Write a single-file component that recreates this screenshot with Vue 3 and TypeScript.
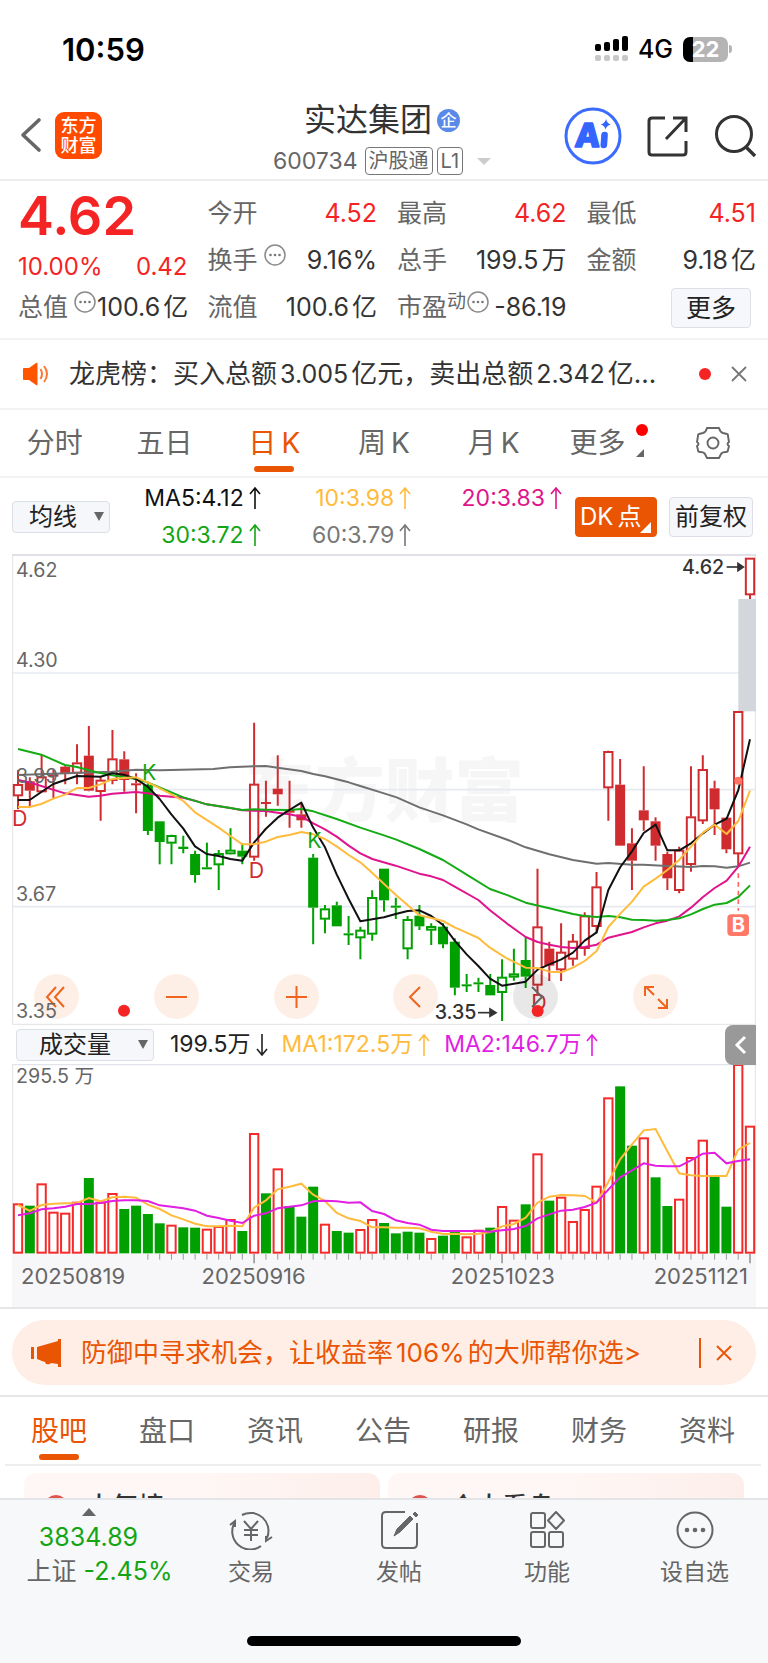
<script setup lang="ts">
import { ref } from 'vue'

type Point = [number, number]
type Candle = { kind: string; x: number; high: number; top: number; bottom: number; low: number }

const STEP = 35.42
const FIRST = 18
const xAt = (i: number): number => FIRST + STEP * i

/* Each row: kind, high, body top, body bottom, low. r/g hollow, R/G filled. */
const parse = (start: number, shift: number, rows: string): Candle[] =>
  rows
    .trim()
    .split(/\s*;\s*/)
    .map((row, n) => {
      const [kind, ...v] = row.split(' ')
      const [high, top, bottom, low] = v.map((s) => Number(s) + shift)
      return { kind, x: xAt(start + n), high, top, bottom, low }
    })

const candles: Candle[] = [
  ...parse(0, 498, `r 150 193 228 268; R 172 184 212 258; r 104 170 216 216; R 150 163 170 235; R 135 140 162 193;
    r 73 128 160 193; R 18 107 212 214; r 170 180 215 302; r 30 116 182 193; R 94 118 180 215; R 160 190 195 280;
    G 190 195 333 345; G 304 304 366 433; g 344 346 370 433; G 347 380 387 400; G 392 402 465 488; G 368 442 446 446;
    g 390 400 435 510; g 325 390 402 403; G 370 392 410 433; r 8 192 412 422; R 182 246 250 290; R 106 206 223 257;
    R 182 268 278 323; R 250 283 301 323; G 402 413 563 673; g 555 566 598 640; G 545 556 619 619; G 588 640 644 675;
    g 620 630 654 718; g 511 532 643 662; G 446 446 541 575; G 533 557 563 597; g 588 598 687 718; G 555 587 619 630;
    g 610 619 631 675; G 610 620 673 685; G 655 665 803 826; G 762 793 797 816; G 773 787 793 816; G 762 795 826 826;
    g 718 771 818 903`),
  ...parse(42, 438, `g 746 821 832 842; G 711 780 830 864; r 506 680 856 885; R 725 746 797 843; r 670 756 810 843;
    r 702 723 778 797; r 637 647 746 767; r 516 560 680 700; r 152 154 264 362; R 177 254 437 437; R 385 430 482 570;
    R 199 331 361 392; R 352 364 437 482; R 455 462 535 570; r 440 450 572 580; r 199 350 494 515; r 166 208 363 372;
    R 242 265 328 405; R 352 353 448 460; r 34 34 462 500; r -426 -426 -315 -303`),
]

/* Averages are stored in three stretches of the timeline, each with its own origin. */
const origins: Point[] = [[-36, 498], [714, 498], [1488, 438]]
const stitch = (...parts: string[]): string =>
  parts
    .map((part, n) =>
      part
        .split(' ')
        .map((pair) => {
          const [x, y] = pair.split(',').map(Number)
          return `${x + origins[n][0]},${y + origins[n][1]}`
        })
        .join(' '),
    )
    .join(' ')

const averages = [
  {
    color: '#6f6f6f',
    points: stitch(
      '54,165 200,160 337,155 408,149 480,151 640,147 690,142 762,139',
      '47,138 83,143 154,153 190,162 225,169 296,187 331,198 402,220 440,232 508,262 579,286 650,313 685,328',
      '0,420 53,442 124,463 195,480 266,491 301,489 372,494 407,494 478,498 549,501 585,498 620,499 656,503 691,499 726,488',
    ),
  },
  {
    color: '#e0148c',
    points: stitch(
      '54,180 89,187 124,198 195,220 266,230 301,227 337,221 408,216 443,220 480,227 550,233 585,242 620,253 691,264 727,271 762,272',
      '47,273 83,278 118,283 154,290 190,310 225,328 260,350 296,377 331,400 367,417 437,437 508,461 544,469 579,480 614,500 685,540 720,571',
      '0,673 53,711 89,726 124,734 160,741 195,744 230,741 266,734 301,713 372,696 407,682 443,670 478,662 514,649 549,623 585,591 620,564 656,542 691,500 726,440',
    ),
  },
  {
    color: '#14ab14',
    points: stitch(
      '54,87 124,104 195,135 231,141 290,157 337,166 408,177 443,187 550,232 620,253 691,264 727,270 762,268',
      '47,269 118,270 154,267 190,274 260,297 331,323 402,346 437,358 508,387 579,420 650,464 720,507',
      '0,586 53,608 124,625 195,642 230,648 266,651 301,648 337,652 372,659 407,660 443,662 478,660 514,655 549,643 585,627 620,614 656,609 691,591 726,556',
    ),
  },
  {
    color: '#111111',
    points: stitch(
      '54,240 89,240 124,216 160,192 195,180 231,168 301,170 337,160 372,164 408,177 443,200 479,237 514,283 550,326 585,379 620,402 656,408 691,417 727,422 762,368',
      '47,327 83,293 118,270 154,248 189,322 225,382 260,463 296,537 331,604 367,598 402,592 437,582 473,573 508,571 544,588 579,615 614,662 650,703 685,738 720,776 756,797',
      '0,854 53,845 89,809 124,793 160,778 195,758 230,722 266,697 301,570 337,501 372,454 407,399 443,374 478,451 514,451 549,430 585,400 620,374 656,356 691,270 726,118',
    ),
  },
  {
    color: '#ffbb3c',
    points: stitch(
      '54,261 89,261 124,252 160,236 195,224 231,204 266,204 301,193 337,177 372,174 408,172 443,187 480,205 514,223 550,243 585,277 656,323 691,348 727,373 762,373',
      '47,365 83,351 118,345 154,336 190,343 225,357 260,379 296,405 331,427 367,459 437,524 508,586 544,594 579,603 614,622 650,638 685,654 720,683 756,706',
      '0,777 53,803 89,804 124,815 160,817 195,803 230,783 266,753 301,681 337,641 372,605 407,560 443,536 478,510 514,479 549,440 585,398 620,374 656,402 691,363 726,272',
    ),
  },
]

const BASE = 697
const volumes = (
  'r550 G555 r490 r575 r578 r545 G472 r545 r519 G565 G555 G580 G608 r614 G620 G621 r626 r618 r597 G631 r339 G518 ' +
  'r445 G556 G588 G498 r611 G631 G636 r627 r597 G607 G638 G633 G636 r654 G645 G628 r649 r629 G621 r558 r599 G551 ' +
  'r400 G540 r530 r603 r567 r497 r232 G197 G375 r352 G470 G556 r536 r411 r359 G465 G558 r132 r317'
)
  .split(' ')
  .map((v, i) => ({ up: v[0] === 'r', y: Number(v.slice(1)), x: xAt(i) }))

const trace = (values: string): string =>
  values
    .split(' ')
    .map((v, i) => `${xAt(i)},${v}`)
    .join(' ')
const volumeShort = trace(
  '552 570 552 548 547 546 531 541 529 527 530 551 564 583 595 608 616 616 614 616 560 538 505 497 488 521 540 576 592 600 619 619 620 620 622 632 639 638 640 638 633 616 609 590 545 527 522 523 525 545 483 415 370 328 324 391 457 463 465 465 465 386 366',
)
const volumeLong = trace(
  '583 577 565 562 557 549 549 546 540 538 538 540 553 557 562 569 584 591 599 606 584 577 562 557 553 541 539 541 545 544 570 579 598 606 611 626 630 630 630 630 632 628 624 615 592 580 569 566 558 545 506 469 448 427 434 436 436 418 398 395 427 420 415',
)
const ticks = Array.from({ length: 52 }, (_, n) => n + 11)
const isMajor = (i: number): boolean => i === 20 || i === 41 || i === 62

const periods = [
  { zh: '分时', en: '' },
  { zh: '五日', en: '' },
  { zh: '日', en: 'K' },
  { zh: '周', en: 'K' },
  { zh: '月', en: 'K' },
]
const period = ref(2)
const sections = ['股吧', '盘口', '资讯', '公告', '研报', '财务', '资料']
const section = ref(0)
const mas = [
  { text: 'MA5:4.12', tone: 'black' },
  { text: '10:3.98', tone: 'amber' },
  { text: '20:3.83', tone: 'pink' },
  { text: '30:3.72', tone: 'green' },
  { text: '60:3.79', tone: 'gray' },
]
</script>

<template>
  <div class="app">
    <svg class="defs" aria-hidden="true">
      <symbol id="arrow-up" viewBox="0 0 12 24">
        <path d="M6 23V2M1 8l5-6 5 6" fill="none" stroke="currentColor" stroke-width="1.6" />
      </symbol>
      <symbol id="info" viewBox="0 0 24 24">
        <circle cx="12" cy="12" r="10" fill="none" stroke="#8a8a8a" stroke-width="1.5" />
        <circle cx="7.5" cy="12" r="1.3" fill="#777" /><circle cx="12" cy="12" r="1.3" fill="#777" /><circle cx="16.5" cy="12" r="1.3" fill="#777" />
      </symbol>
      <symbol id="cross" viewBox="0 0 20 20">
        <path d="M3 3l14 14M17 3L3 17" fill="none" stroke="currentColor" stroke-width="1.8" />
      </symbol>
    </svg>

    <div class="status">
      <time>10:59</time>
      <div class="status-right">
        <svg width="36" height="26" viewBox="0 0 36 26">
          <g fill="#000"><rect x="1" y="8" width="6" height="7" rx="2" /><rect x="10" y="6" width="6" height="9" rx="2" /><rect x="19" y="3" width="6" height="12" rx="2" /><rect x="28" y="0" width="6" height="15" rx="2" /></g>
          <g fill="#c8c8c8"><rect x="1" y="19" width="6" height="6" rx="2" /><rect x="10" y="19" width="6" height="6" rx="2" /><rect x="19" y="19" width="6" height="6" rx="2" /><rect x="28" y="19" width="6" height="6" rx="2" /></g>
        </svg>
        <span class="net">4G</span>
        <span class="battery">22</span>
        <i class="battery-cap"></i>
      </div>
    </div>

    <header class="header">
      <div class="header-side">
        <button class="bare" aria-label="返回">
          <svg width="24" height="36" viewBox="0 0 24 36"><path d="M20 3L4 18l16 15" fill="none" stroke="#666" stroke-width="3.6" stroke-linecap="round" stroke-linejoin="round" /></svg>
        </button>
        <a class="logo" href="#">东方<br />财富</a>
      </div>
      <div class="header-mid">
        <h1>实达集团<span class="corp">企</span></h1>
        <div class="code">
          <span>600734</span><span class="tag">沪股通</span><span class="tag">L1</span><i class="caret"></i>
        </div>
      </div>
      <div class="header-side end">
        <button class="bare" aria-label="Ai">
          <svg width="58" height="58" viewBox="0 0 58 58">
            <circle cx="29" cy="29" r="27" fill="none" stroke="#3b6bff" stroke-width="3" />
            <g fill="#3565ff" stroke="#3565ff" transform="skewX(-4)">
              <text x="13" y="40" font-size="33" font-weight="800" stroke-width="1.6" stroke-linejoin="round">A</text>
              <path d="M42.500 28v10" stroke-width="6.600" stroke-linecap="round" />
              <path d="M43 12q1 4.400 5 5.400q-4 1-5 5q-1-4-5-5q4-1 5-5.400z" stroke="none" />
            </g>
          </svg>
        </button>
        <button class="bare" aria-label="分享">
          <svg width="44" height="44" viewBox="0 0 44 44"><path d="M19 4H6q-3 0-3 3v31q0 3 3 3h31q3 0 3-3V27M27 4h13v14M39 5L20 25" fill="none" stroke="#333" stroke-width="3" /></svg>
        </button>
        <button class="bare" aria-label="搜索">
          <svg width="44" height="44" viewBox="0 0 44 44"><circle cx="20" cy="20" r="17.500" fill="none" stroke="#333" stroke-width="3" /><path d="M32 33l9 9" stroke="#333" stroke-width="3.400" /></svg>
        </button>
      </div>
    </header>

    <section class="quote">
      <div class="price">4.62</div>
      <div class="cell r1 c2"><span class="k">今开</span><span class="v red">4.52</span></div>
      <div class="cell r1 c3"><span class="k">最高</span><span class="v red">4.62</span></div>
      <div class="cell r1 c4"><span class="k">最低</span><span class="v red">4.51</span></div>
      <div class="cell r2 c1 change"><span>10.00%</span><span>0.42</span></div>
      <div class="cell r2 c2"><span class="k">换手<svg class="info"><use href="#info" /></svg></span><span class="v">9.16%</span></div>
      <div class="cell r2 c3"><span class="k">总手</span><span class="v">199.5<b>万</b></span></div>
      <div class="cell r2 c4"><span class="k">金额</span><span class="v">9.18<b>亿</b></span></div>
      <div class="cell r3 c1"><span class="k">总值<svg class="info"><use href="#info" /></svg></span><span class="v">100.6<b>亿</b></span></div>
      <div class="cell r3 c2"><span class="k">流值</span><span class="v">100.6<b>亿</b></span></div>
      <div class="cell r3 c3"><span class="k">市盈<sup>动</sup><svg class="info flush"><use href="#info" /></svg></span><span class="v">-86.19</span></div>
      <div class="cell r3 c4 last"><button class="chip more">更多</button></div>
    </section>

    <section class="news">
      <svg width="28" height="24" viewBox="0 0 28 24"><path d="M1 6.500Q1 6 2 6h5l7-5q1.500-1 1.500 1v20q0 2-1.500 1l-7-5H2q-1 0-1-1z" fill="#ff5500" /><path d="M18.500 7q3 5 0 10M22 4q6 8 0 16" fill="none" stroke="#ff7733" stroke-width="2" /></svg>
      <a href="#">龙虎榜：买入总额<em>3.005</em>亿元，卖出总额<em>2.342</em>亿...</a>
      <i class="dot"></i>
      <button class="bare gray" aria-label="关闭"><svg width="20" height="20"><use href="#cross" /></svg></button>
    </section>

    <nav class="tabs periods">
      <button v-for="(p, i) in periods" :key="p.zh" :class="{ on: period === i }" @click="period = i">{{ p.zh }}<em v-if="p.en">{{ p.en }}</em></button>
      <button class="with-mark">更多<i class="badge"></i><i class="corner"></i></button>
      <button aria-label="设置">
        <svg width="34" height="34" viewBox="0 0 34 34" fill="none" stroke="#666" stroke-width="1.900"><path d="M11 2h12q1 4 4 5l4 1q1 0 1 2l1 6q-3 2 0 4l-1 4q0 2-2 2-4 0-5 2l-2 4H11l-2-4q-1-2-5-2-2 0-2-2l-1-4q3-2 0-4l1-6q0-2 1-2l4-1q3-1 4-5z" stroke-linejoin="round" /><circle cx="17" cy="17" r="5.500" /></svg>
      </button>
    </nav>

    <section class="ma">
      <label class="select ma-select">
        <select aria-label="均线"><option>均线</option></select>
      </label>
      <div class="ma-grid">
        <span v-for="m in mas" :key="m.text" :class="m.tone">{{ m.text }}<svg class="arr"><use href="#arrow-up" /></svg></span>
      </div>
      <button class="chip dk">DK<em>点</em><i></i></button>
      <button class="chip">前复权</button>
    </section>

    <section class="charts">
      <div class="kline">
        <svg class="plot" viewBox="0 0 2232 1413">
          <text class="mark" x="700" y="786">东方财富</text>
          <g stroke="#e6eaf0" stroke-width="5"><path d="M0 357H2232M0 707H2232M0 1058H2232" /></g>
          <path d="M0 3H2232" stroke="#e0e0e6" stroke-width="6" />
          <path d="M2 3V1411H2230V3" fill="none" stroke="#e2e2e6" stroke-width="3" />
          <rect x="2179" y="135" width="53" height="337" fill="#d3d7db" />
          <g v-for="(c, i) in candles" :key="i" :stroke="c.kind.toLowerCase() === 'r' ? '#d02c30' : '#00a000'">
            <path :d="`M${c.x} ${c.high}V${c.top}M${c.x} ${c.bottom}V${c.low}`" stroke-width="6" />
            <rect v-if="c.kind === 'R' || c.kind === 'G'" :x="c.x - 15" :y="c.top" width="30" :height="Math.max(c.bottom - c.top, 6)" :fill="c.kind === 'R' ? '#d02c30' : '#00a000'" stroke="none" />
            <rect v-else :x="c.x - 12.500" :y="c.top + 2" width="25" :height="c.bottom - c.top - 4" fill="#fff" stroke-width="6" />
          </g>
          <polyline v-for="a in averages" :key="a.color" :points="a.points" fill="none" :stroke="a.color" stroke-width="6" stroke-linejoin="round" />
          <g class="axis">
            <text x="12" y="68">4.62</text><text x="12" y="338">4.30</text><text x="12" y="688">3.99</text><text x="12" y="1041">3.67</text>
          </g>
          <g class="signal down"><text x="0" y="816">D</text><text x="710" y="971">D</text><text x="1558" y="1368">D</text></g>
          <g class="signal up"><text x="390" y="679">K</text><text x="886" y="883">K</text></g>
          <g class="extreme">
            <text x="2010" y="60">4.62</text><path d="M2144 39h38" /><path d="M2178 28l16 11-16 11z" />
            <text x="1268" y="1396">3.35</text><path d="M1398 1376h40" /><path d="M1434 1365l18 11-18 11z" />
          </g>
          <circle cx="2179" cy="680" r="12" fill="#ff7565" />
          <path d="M2179 958v112" stroke="#f66" stroke-width="5" stroke-dasharray="14 12" />
          <rect x="2146" y="1081" width="65" height="65" rx="12" fill="#ff7969" />
          <text class="buy" x="2179" y="1134">B</text>
        </svg>
        <div class="tools">
          <button aria-label="最左"><svg viewBox="0 0 45 45"><path d="M22 13l-9 10 9 10M30 13l-9 10 9 10" /></svg></button>
          <button aria-label="缩小"><svg viewBox="0 0 45 45"><path d="M12 23h21" /></svg></button>
          <button aria-label="放大"><svg viewBox="0 0 45 45"><path d="M12 23h21M22.500 12v22" /></svg></button>
          <button aria-label="左移"><svg viewBox="0 0 45 45"><path d="M27 13l-10 10 10 10" /></svg></button>
          <button class="off" aria-label="右移"><svg viewBox="0 0 45 45"><path d="M19 13l10 10-10 10" /></svg></button>
          <button aria-label="全屏"><svg viewBox="0 0 45 45"><path d="M21 21l-8-8M21 13h-9v9M25 25l8 8M25 34h9v-9" /></svg></button>
        </div>
        <svg class="plot over" viewBox="0 0 2232 1413">
          <text class="axis" x="12" y="1391">3.35</text>
          <g fill="#f52424"><circle cx="336" cy="1370" r="18" /><circle cx="1577" cy="1371" r="18" /></g>
        </svg>
      </div>

      <div class="vol-head">
        <label class="select vol-select">
          <select aria-label="成交量"><option>成交量</option></select>
        </label>
        <span>199.5万<svg class="arr flip"><use href="#arrow-up" /></svg></span>
        <span class="amber">MA1:172.5万<svg class="arr"><use href="#arrow-up" /></svg></span>
        <span class="magenta">MA2:146.7万<svg class="arr"><use href="#arrow-up" /></svg></span>
        <button class="fold" aria-label="展开"><svg width="14" height="20" viewBox="0 0 14 20"><path d="M11 2L3 10l8 8" fill="none" stroke="#fff" stroke-width="3" /></svg></button>
      </div>

      <svg class="plot" viewBox="0 129 2232 600">
        <rect x="0" y="697" width="2232" height="40" fill="#f7f7fa" />
        <path d="M0 131H2232" stroke="#e2e4ec" stroke-width="4" />
        <path d="M2 131V697M2230 131V697" stroke="#e2e2e6" stroke-width="3" />
        <text class="axis" x="12" y="187">295.5 万</text>
        <template v-for="(v, i) in volumes" :key="i">
          <rect v-if="v.up" :x="v.x - 12.500" :y="v.y" width="25" :height="BASE - v.y - 2" fill="#fff" stroke="#f52a2a" stroke-width="6" />
          <rect v-else :x="v.x - 15" :y="v.y - 1" width="30" :height="BASE - v.y + 1" fill="#00a000" />
        </template>
        <path v-for="i in ticks" :key="i" :d="`M${xAt(i)} 699v${isMajor(i) ? 28 : 17}`" stroke="#999" :stroke-width="isMajor(i) ? 5 : 3" />
        <polyline :points="volumeShort" fill="none" stroke="#ffbb3c" stroke-width="6" />
        <polyline :points="volumeLong" fill="none" stroke="#e21ee2" stroke-width="6" />
      </svg>
      <div class="dates"><span>20250819</span><span>20250916</span><span>20251023</span><span>20251121</span></div>
    </section>

    <section class="promo-wrap">
      <div class="promo">
        <svg width="32" height="28" viewBox="0 0 32 28" fill="#ea5504"><path d="M0 8h3v12H0zM6 8L27 2V0h3v28h-3v-3l-7-1q-1 2-5 1l-1-2-3-1-5-2z" /></svg>
        <a href="#">防御中寻求机会，让收益率<em>106%</em>的大师帮你选&gt;</a>
        <button class="bare" aria-label="关闭推广"><svg width="20" height="20"><use href="#cross" /></svg></button>
      </div>
    </section>

    <nav class="tabs sections">
      <button v-for="(s, i) in sections" :key="s" :class="{ on: section === i }" @click="section = i">{{ s }}</button>
    </nav>

    <main class="cards">
      <article><i></i>大气榜</article>
      <article><i></i>个大看盘</article>
    </main>

    <footer class="bottom">
      <a class="index" href="#">
        <svg width="14" height="8" viewBox="0 0 14 8"><path d="M7 0l7 8H0z" fill="#666" stroke="none" /></svg>
        <span class="green">3834.89</span>
        <span class="market">上证 <b class="green">-2.45%</b></span>
      </a>
      <a href="#">
        <svg width="46" height="40" viewBox="0 0 46 40"><path d="M14 5a18 18 0 0 1 25 23M33 36A18 18 0 0 1 7 12M2 15l5-4v6M44 27l-6 4v-5M16 11l7 8 7-8M23 19v12M16 20h14M16 25h14" /></svg>
        <span>交易</span>
      </a>
      <a href="#">
        <svg width="40" height="40" viewBox="0 0 40 40"><path d="M26 2H7Q3 2 3 6v28q0 4 4 4h27q4 0 4-4V13" /><path d="M15 26l3-7L31 6l3 3-13 13zM34 4l2-2 3 3-2 2z" fill="#666" stroke-width="1" /></svg>
        <span>发帖</span>
      </a>
      <a href="#">
        <svg width="38" height="40" viewBox="0 0 38 40"><rect x="3" y="3" width="14" height="15" rx="2" /><rect x="3" y="22" width="14" height="15" rx="2" /><rect x="21" y="22" width="14" height="15" rx="2" /><path d="M28 2l8 8.500-8 8.500-8-8.500z" stroke-linejoin="round" /></svg>
        <span>功能</span>
      </a>
      <a href="#">
        <svg width="40" height="40" viewBox="0 0 40 40"><circle cx="20" cy="20" r="17.500" /><g fill="#666" stroke="none"><circle cx="12" cy="20" r="2.300" /><circle cx="20" cy="20" r="2.300" /><circle cx="28" cy="20" r="2.300" /></g></svg>
        <span>设自选</span>
      </a>
      <i class="home"></i>
    </footer>
  </div>
</template>

<style>
body {
  margin: 0;
  background: #fff;
}
</style>

<style scoped>
.app {
  display: flex;
  flex-direction: column;
  height: 100vh;
  overflow: hidden;
  background: #fff;
  color: #333;
  font-family: Inter, 'Noto Sans CJK SC', sans-serif;
  font-size: 25px;
  line-height: 1;
}
.app > * { flex: none; }
.defs { position: absolute; width: 0; height: 0; }
button, select {
  font: inherit;
  color: inherit;
  border: 0;
  margin: 0;
  padding: 0;
  background: none;
  cursor: pointer;
}
a { color: inherit; text-decoration: none; }
em, b { font-style: normal; font-weight: 400; }
svg { display: block; }
.bare { display: flex; }
.red { color: #f52424; }
.black { color: #111; }
.amber { color: #ffbb3c; }
.pink { color: #e0148c; }
.green { color: #14a514; }
.gray { color: #777; }
.magenta { color: #e21ee2; }

.status {
  display: flex;
  justify-content: space-between;
  align-items: center;
  height: 98px;
  padding: 0 36px 0 62px;
  box-sizing: border-box;
  color: #000;
}
.status time { font-size: 31px; font-weight: 600; }
.status-right { display: flex; align-items: center; }
.net { font-size: 25px; font-weight: 500; margin: 0 10px 0 8px; }
.battery {
  width: 45px;
  height: 25px;
  border-radius: 7px;
  background: linear-gradient(90deg, #000 10px, #b4b4b4 10px);
  color: #fff;
  font-size: 22px;
  font-weight: 700;
  line-height: 25px;
  text-align: center;
}
.battery-cap { width: 3px; height: 8px; margin-left: 1px; border-radius: 0 4px 4px 0; background: #b4b4b4; }

.header {
  display: grid;
  grid-template-columns: 1fr auto 1fr;
  height: 83px;
  box-sizing: border-box;
  border-bottom: 2px solid #ececee;
}
.header-side { display: flex; align-items: center; padding-left: 19px; padding-bottom: 7px; gap: 12px; }
.header-side.end { justify-content: flex-end; padding: 0 10px 5px 0; gap: 24px; }
.header-mid { padding-right: 4px; }
.logo {
  width: 47px;
  height: 47px;
  padding-top: 4px;
  box-sizing: border-box;
  border-radius: 9px;
  background: #ff4a00;
  color: #fff;
  font-size: 18px;
  font-weight: 500;
  line-height: 20px;
  text-align: center;
}
h1 { display: flex; align-items: center; justify-content: center; gap: 5px; margin: 6px 0 0; font-size: 32px; font-weight: 400; line-height: 32px; }
.corp { width: 23px; height: 23px; border-radius: 50%; background: #5a8ae8; color: #fff; font-size: 16px; font-weight: 500; line-height: 22px; text-align: center; }
.code { display: flex; align-items: center; justify-content: center; gap: 4px; height: 30px; margin-top: 10px; font-size: 23px; color: #666; }
.code > span:first-child { margin-right: 3px; }
.tag { height: 28px; padding: 0 3px; box-sizing: border-box; border: 1px solid #777; border-radius: 4px; font-size: 20px; line-height: 26px; }
.caret { margin-left: 10px; border: 7px solid transparent; border-top: 7px solid #ccc; border-bottom: 0; }

.quote {
  display: grid;
  grid-template-columns: repeat(4, minmax(0, 1fr));
  grid-template-rows: 48px 47px 47px;
  column-gap: 20px;
  height: 159px;
  padding: 8px 12px 0 18px;
  box-sizing: border-box;
  border-bottom: 2px solid #f3f3f5;
}
.price { grid-area: 1 / 1; color: #f52424; font-size: 54px; font-weight: 600; line-height: 54px; }
.cell { display: flex; justify-content: space-between; align-items: center; white-space: nowrap; }
.r1 { grid-row: 1; }
.r2 { grid-row: 2; }
.r3 { grid-row: 3; }
.c1 { grid-column: 1; }
.c2 { grid-column: 2; }
.c3 { grid-column: 3; }
.c4 { grid-column: 4; }
.k { display: flex; color: #666; }
.k sup { font-size: 19px; line-height: 14px; }
.info { width: 24px; height: 24px; margin: -5px 0 0 5px; }
.info.flush { margin-left: 0; }
.v b { margin-left: 3px; }
.change { color: #f52424; font-size: 24px; padding-top: 12px; }
.last { justify-content: flex-end; }
.chip {
  position: relative;
  height: 40px;
  padding: 0 5px;
  box-sizing: border-box;
  border: 1px solid #dcdfe6;
  border-radius: 4px;
  background: #f6f7fa;
  color: #222;
  font-size: 24px;
  line-height: 36px;
  white-space: nowrap;
}
.more { width: 80px; margin-right: 5px; font-size: 25px; }

.news { display: flex; align-items: center; height: 70px; padding: 0 19px 0 22px; box-sizing: border-box; border-bottom: 2px solid #f3f3f5; font-size: 26px; }
.news a { flex: 1; margin-left: 19px; white-space: nowrap; }
.news em, .promo em { margin: 0 3px; }
.news a em { font-size: 25px; }
.dot { width: 12px; height: 12px; margin-right: 18px; border-radius: 50%; background: #f52424; }

.tabs { display: grid; grid-template-columns: repeat(7, 1fr); box-sizing: border-box; font-size: 28px; color: #666; }
.tabs button { position: relative; display: flex; justify-content: center; align-items: center; }
.tabs em { margin-left: 5px; }
.tabs .on { color: #ea5504; }
.tabs .on::after { content: ''; position: absolute; left: 50%; bottom: 4px; width: 40px; height: 6px; margin-left: -20px; border-radius: 3px; background: #ea5504; }
.periods { height: 68px; border-bottom: 2px solid #f3f3f5; }
.with-mark { padding-right: 12px; }
.badge { position: absolute; right: 10px; top: 14px; width: 12px; height: 12px; border-radius: 50%; background: #f00; }
.corner { position: absolute; right: 14px; bottom: 19px; border-style: solid; border-width: 0 0 8px 8px; border-color: transparent transparent #666; }
.periods button:last-child { padding-bottom: 1px; }
.sections { height: 69px; margin: 0 7px 0 5px; border-bottom: 2px solid #eeeef0; }

.ma { display: flex; align-items: center; height: 77px; padding: 0 15px 0 12px; box-sizing: border-box; }
.select { position: relative; display: block; }
.select::after { content: ''; position: absolute; right: 6px; top: 11px; border: 5px solid transparent; border-top: 9px solid #666; border-bottom: 0; pointer-events: none; }
.select select {
  appearance: none;
  width: 100%;
  height: 32px;
  border: 1px solid #dcdfe6;
  border-radius: 4px;
  background: #f6f7fa;
  color: #222;
  font-size: 24px;
  line-height: 28px;
}
.ma-select { width: 98px; }
.ma-select select { padding-left: 16px; }
.vol-select { width: 138px; }
.vol-select select { padding-left: 22px; }
.ma-grid { flex: 1; display: grid; grid-template-columns: repeat(3, 1fr); row-gap: 13px; margin-right: 13px; font-size: 23px; }
.ma-grid span { display: flex; justify-content: flex-end; align-items: center; height: 24px; }
.arr { width: 12px; height: 24px; margin-left: 5px; flex: none; }
.flip { transform: rotate(180deg); }
.dk { width: 82px; padding: 0 4px; margin-right: 12px; border-color: #ea5504; background: #ea5504; color: #fff; text-align: left; overflow: hidden; }
.dk em { margin-left: 4px; }
.dk i { position: absolute; right: 5px; bottom: 3px; border-style: solid; border-width: 0 0 11px 11px; border-color: transparent transparent #fff; }

.charts { padding: 0 12px 0; border-bottom: 2px solid #e6e6e9; margin-top: -1px; }
.kline { position: relative; }
.plot { width: 100%; height: auto; }
.over { position: absolute; inset: 0; pointer-events: none; }
.axis { font-size: 59px; fill: #666; }
.mark { font-size: 209px; font-weight: 900; fill: #f6f6f6; }
.signal { font-size: 64px; }
.down { fill: #d02c30; }
.up { fill: #14a514; }
.extreme { font-size: 59px; font-weight: 500; fill: #333; stroke: none; }
.extreme path { stroke: #333; stroke-width: 5; }
.buy { font-size: 60px; font-weight: 700; fill: #fff; text-anchor: middle; }
.tools { position: absolute; left: 22px; right: 78px; bottom: 6px; display: flex; justify-content: space-between; }
.tools button { width: 45px; height: 45px; border-radius: 50%; background: rgba(253, 228, 214, 0.6); }
.tools svg { fill: none; stroke: #f0641e; stroke-width: 2; }
.tools .off { background: rgba(0, 0, 0, 0.09); }
.tools .off svg { stroke: #666; }

.vol-head { position: relative; display: flex; align-items: center; height: 39px; padding-left: 4px; font-size: 23px; color: #222; }
.vol-head > span { display: flex; align-items: center; margin-left: 16px; }
.vol-head > .magenta { margin-left: 14px; color: #e21ee2; }
.vol-head > .amber { margin-left: 14px; color: #ffbb3c; }
.fold { display: flex; align-items: center; justify-content: center; width: 31px; height: 40px; margin-left: auto; border-radius: 8px 0 0 8px; background: #999; }
.dates { position: relative; display: flex; height: 43px; padding: 1px 8px 0 9px; box-sizing: border-box; background: #f7f7fa; color: #666; font-size: 22px; line-height: 22px; }
.dates span:nth-child(2) { margin-left: 10.5%; }
.dates span:nth-child(3) { margin-left: auto; margin-right: 13.6%; }

.promo-wrap { height: 88px; padding: 11px 12px 0; box-sizing: border-box; border-bottom: 2px solid #e6e6e9; }
.promo { display: flex; align-items: center; height: 65px; padding: 0 22px 0 19px; border-radius: 33px; background: #feeee5; color: #ea5504; font-size: 26px; }
.promo a { flex: 1; margin-left: 18px; white-space: nowrap; }
.promo .bare { height: 30px; padding-left: 13px; align-items: center; border-left: 2px solid #ea5504; }

.app > .cards { flex: 1 1 0; min-height: 0; display: grid; grid-template-columns: 1fr 1fr; gap: 8px; padding: 7px 24px 0; overflow: hidden; }
.cards article { display: flex; align-items: center; gap: 18px; height: 68px; padding: 0 20px; border-radius: 12px; background: linear-gradient(90deg, #fff7f5 50%, #fdeeea); font-size: 26px; font-weight: 500; }
.cards i { width: 24px; height: 24px; border-radius: 50%; background: #e0524c; }

.bottom {
  position: relative;
  display: grid;
  grid-template-columns: 177fr 148fr 148fr 148fr 147fr;
  height: 165px;
  box-sizing: border-box;
  border-top: 2px solid #e3e4e7;
  background: #f7f8fa;
  color: #666;
  font-size: 23px;
}
.bottom a { display: flex; flex-direction: column; align-items: center; gap: 10px; height: 90px; padding-top: 10px; }
.bottom a > svg { fill: none; stroke: #666; stroke-width: 2; }
.bottom a > span { line-height: 25px; white-space: nowrap; }
.bottom .index { padding-top: 8px; font-size: 25px; gap: 9px; }
.bottom .market { padding-left: 22px; }
.home { position: absolute; left: 50%; bottom: 17px; width: 274px; height: 10px; margin-left: -137px; border-radius: 5px; background: #000; }
</style>
